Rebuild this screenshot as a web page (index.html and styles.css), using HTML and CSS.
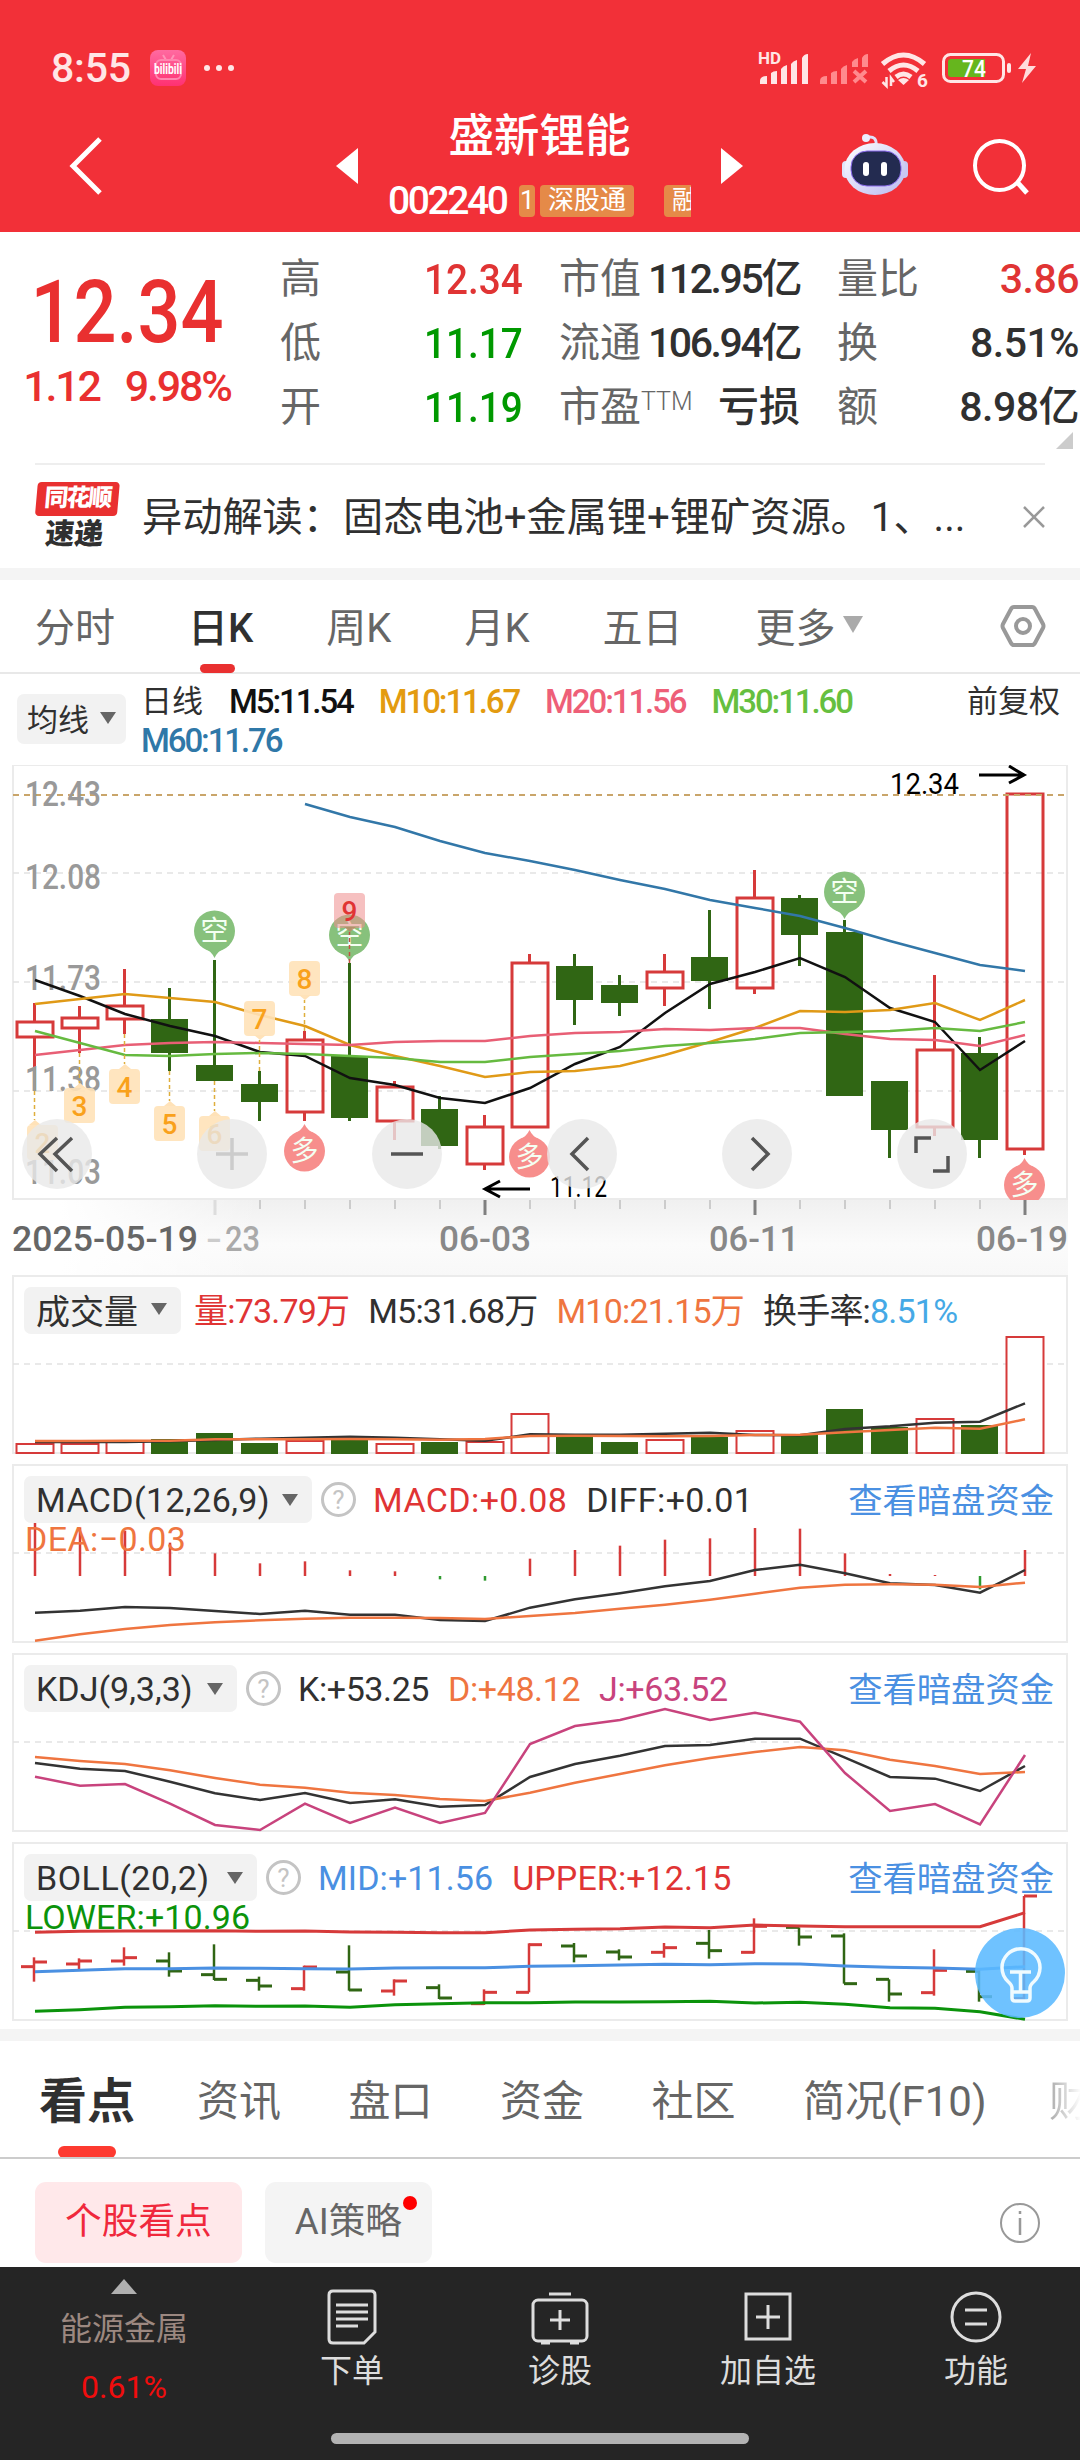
FILE: index.html
```html
<!DOCTYPE html>
<html lang="zh-CN">
  <head>
    <meta charset="UTF-8" />
    <meta name="viewport" content="width=device-width, initial-scale=1.0" />
    <title>盛新锂能 002240</title>
    <link rel="stylesheet" href="styles.css">
  </head>
  <body>
    <header class="top">
      <div class="status">
        <span class="clock">8:55</span>
        <svg class="app-icon" width="36" height="36" viewBox="0 0 36 36">
          <defs>
            <linearGradient id="pink" x1="0" y1="0" x2="0" y2="1">
              <stop offset="0" stop-color="#ff6aa0" />
              <stop offset="1" stop-color="#ff3172" />
            </linearGradient>
          </defs>
          <rect width="36" height="36" rx="8" fill="url(#pink)" />
          <path d="M13 5l3 5M24 5l-3 5" stroke="#ff93b8" stroke-width="2" />
          <rect x="6" y="10" width="25" height="19" rx="5" fill="none" stroke="#ff85af" stroke-width="2" />
          <text x="4" y="24" class="bili" textLength="28" lengthAdjust="spacingAndGlyphs">bilibili</text>
        </svg>
        <span class="dots"><i></i><i></i><i></i></span>
        <svg class="signals" width="290" height="50" viewBox="750 43 290 50">
          <g fill="#ffe6e6">
            <text x="758" y="64" class="hd" textLength="23" lengthAdjust="spacingAndGlyphs">HD</text>
            <path d="M760 84v-3q0-5 7-5v8zM771 84V73q2-2 6-2v13zM781 84V69q2-3 6-4v19zM791 84V64q2-3 6-4v24zM802 84V58q2-4 6-4v30z" />
          </g>
          <g fill="#ff8a8d">
            <path d="M820 84v-3q0-5 7-5v8zM831 84V73q2-2 6-2v13zM841 84V69q2-3 6-4v19zM852 67v-5q2-3 6-4v9zM862 67V58q2-4 6-4v13z" />
            <path d="M854 71l12 11M866 71l-12 11" stroke="#ff8a8d" stroke-width="4" />
          </g>
          <g fill="none" stroke="#ffe6e6" stroke-width="5">
            <path d="M882.500 64q21-18 42 0" />
            <path d="M889 71q14.500-12 29 0" />
            <path d="M896 77q7.500-6 15 0" />
          </g>
          <path d="M898 80q5.500-4 11 0l-5.500 5z" fill="#ffe6e6" />
          <path d="M886.500 77v9l-4-4M891 86v-8l3 4" fill="none" stroke="#ffe6e6" stroke-width="2.500" />
          <text x="917" y="87" class="six">6</text>
          <rect x="943.500" y="54.500" width="60" height="27" rx="7" fill="none" stroke="#ffe6e6" stroke-width="3" />
          <path d="M951 59h34v18h-34q-3 0-3-3v-12q0-3 3-3z" fill="#66b61e" />
          <rect x="1007" y="63" width="4" height="10" rx="2" fill="#ffe6e6" />
          <text x="962" y="76.500" class="bat" textLength="24" lengthAdjust="spacingAndGlyphs">74</text>
          <path d="M1031 53l-13 16h8l-4 14 14-17h-8z" fill="#ffdcdc" />
        </svg>
      </div>
      <div class="nav">
        <svg class="back" width="36" height="62" viewBox="0 0 36 62">
          <path d="M32 4L5 31l27 27" fill="none" stroke="#fff" stroke-width="5" />
        </svg>
        <svg class="prev" width="22" height="36" viewBox="0 0 22 36"><path d="M22 0v36L0 18z" fill="#fff" /></svg>
        <div class="stock">
          <div class="name">盛新锂能</div>
          <div class="code">
            <span class="num">002240</span>
            <div class="chips">
              <span class="chip one">1</span>
              <span class="chip">深股通</span>
              <span class="chip last">融</span>
            </div>
          </div>
        </div>
        <svg class="next" width="22" height="36" viewBox="0 0 22 36"><path d="M0 0v36l22-18z" fill="#fff" /></svg>
        <svg class="robot" width="68" height="64" viewBox="841 131 68 64">
          <defs>
            <linearGradient id="shell" x1="0" y1="0" x2="1" y2="1">
              <stop offset="0" stop-color="#fff" />
              <stop offset="1" stop-color="#b9b8f0" />
            </linearGradient>
          </defs>
          <path d="M876 144q1-9-8-8" fill="none" stroke="#dfe0fb" stroke-width="3" />
          <circle cx="866" cy="137" r="4" fill="#eceefe" />
          <rect x="842" y="160" width="10" height="17" rx="4" fill="#e0e4fb" />
          <rect x="898" y="160" width="10" height="17" rx="4" fill="#c9c8f3" />
          <ellipse cx="875" cy="168" rx="30.500" ry="26" fill="url(#shell)" />
          <rect x="851" y="150" width="50" height="35" rx="16" fill="#232b50" stroke="#8d6df0" stroke-width="1" />
          <rect x="863" y="161" width="6" height="14" rx="3" fill="#fff" />
          <rect x="881" y="161" width="6" height="14" rx="3" fill="#fff" />
        </svg>
        <svg class="search" width="58" height="58" viewBox="972 136 58 58">
          <circle cx="999.500" cy="164.500" r="24.500" fill="none" stroke="#fff" stroke-width="4" />
          <path d="M1017 181l10 11" stroke="#fff" stroke-width="5" />
        </svg>
      </div>
    </header>

    <section class="quote">
      <div class="price">
        <div class="last">12.34</div>
        <div class="change"><span>1.12</span><span>9.98%</span></div>
      </div>
      <dl class="col c1">
        <div><dt>高</dt><dd class="up">12.34</dd></div>
        <div><dt>低</dt><dd class="down">11.17</dd></div>
        <div><dt>开</dt><dd class="down">11.19</dd></div>
      </dl>
      <dl class="col c2">
        <div><dt>市值</dt><dd>112.95亿</dd></div>
        <div><dt>流通</dt><dd>106.94亿</dd></div>
        <div><dt>市盈<sup>TTM</sup></dt><dd class="loss">亏损</dd></div>
      </dl>
      <dl class="col c3">
        <div><dt>量比</dt><dd class="up">3.86</dd></div>
        <div><dt>换</dt><dd>8.51%</dd></div>
        <div><dt>额</dt><dd>8.98亿</dd></div>
      </dl>
      <svg class="corner" width="17" height="17"><path d="M17 0v17H0z" fill="#ccc" /></svg>
    </section>

    <section class="news">
      <div class="brand">
        <span class="brand-top">同花顺</span>
        <span class="brand-bottom">速递</span>
      </div>
      <p>异动解读：固态电池+金属锂+锂矿资源。1、...</p>
      <svg width="22" height="22" viewBox="0 0 22 22"><path d="M1 1l20 20M21 1L1 21" stroke="#999" stroke-width="2.500" /></svg>
    </section>

    <nav class="periods">
      <span>分时</span>
      <span class="on">日K</span>
      <span>周K</span>
      <span>月K</span>
      <span>五日</span>
      <span class="more">更多<svg width="20" height="17"><path d="M0 0h20L10 17z" fill="#aaa" /></svg></span>
      <svg class="hex" width="46" height="46" viewBox="0 0 46 46">
        <path d="M14 4h18q2 0 3 2l8 15q1 2 0 4l-8 15q-1 2-3 2H14q-2 0-3-2L3 25q-1-2 0-4l8-15q1-2 3-2z" fill="none" stroke="#999" stroke-width="4" />
        <circle cx="23" cy="23" r="7" fill="none" stroke="#999" stroke-width="4" />
      </svg>
    </nav>

    <section class="ma">
      <button class="pick">均线<svg width="16" height="12"><path d="M0 0h16L8 12z" /></svg></button>
      <div class="ma-values">
        <span class="cn">日线</span><span class="m5">M5:11.54</span><span class="m10">M10:11.67</span><span class="m20">M20:11.56</span><span class="m30">M30:11.60</span>
        <span class="m60">M60:11.76</span>
      </div>
      <span class="adjust">前复权</span>
    </section>

    <div class="kline">
      <svg id="kline" width="1080" height="510" viewBox="0 765 1080 510"></svg>
    </div>

    <section class="panel vol">
      <svg id="vol" width="1080" height="180" viewBox="0 1275 1080 180"></svg>
      <div class="row">
        <button class="pick">成交量<svg width="16" height="12"><path d="M0 0h16L8 12z" /></svg></button>
        <span class="red">量:73.79万</span>
        <span>M5:31.68万</span>
        <span class="orange">M10:21.15万</span>
        <span>换手率:<b class="sky">8.51%</b></span>
      </div>
    </section>

    <section class="panel macd">
      <svg id="macd" width="1080" height="180" viewBox="0 1464 1080 180"></svg>
      <div class="row">
        <button class="pick">MACD(12,26,9)<svg width="16" height="12"><path d="M0 0h16L8 12z" /></svg></button>
        <i class="help">?</i>
        <span class="red">MACD:+0.08</span>
        <span>DIFF:+0.01</span>
        <a>查看暗盘资金</a>
      </div>
      <div class="row second orange">DEA:−0.03</div>
    </section>

    <section class="panel kdj">
      <svg id="kdj" width="1080" height="180" viewBox="0 1653 1080 180"></svg>
      <div class="row">
        <button class="pick">KDJ(9,3,3)<svg width="16" height="12"><path d="M0 0h16L8 12z" /></svg></button>
        <i class="help">?</i>
        <span>K:+53.25</span>
        <span class="orange">D:+48.12</span>
        <span class="purple">J:+63.52</span>
        <a>查看暗盘资金</a>
      </div>
    </section>

    <section class="panel boll">
      <svg id="boll" width="1080" height="180" viewBox="0 1842 1080 180"></svg>
      <div class="row">
        <button class="pick">BOLL(20,2)<svg width="16" height="12"><path d="M0 0h16L8 12z" /></svg></button>
        <i class="help">?</i>
        <span class="blue">MID:+11.56</span>
        <span class="red">UPPER:+12.15</span>
        <a>查看暗盘资金</a>
      </div>
      <div class="row second green">LOWER:+10.96</div>
      <svg class="bulb" width="90" height="90" viewBox="0 0 90 90">
        <circle cx="45" cy="45" r="45" fill="#5bb9ff" fill-opacity=".88" />
        <path d="M37 70V60q0-3-4-6.500a19 19 0 1 1 26 0q-4 3.500-4 6.500v10q0 3-3 3H40q-3 0-3-3zM38 64h16M35 44h21M45.500 44v20" fill="none" stroke="#f0fbff" stroke-width="3.500" />
      </svg>
    </section>

    <nav class="sections">
      <span class="on">看点</span>
      <span>资讯</span>
      <span>盘口</span>
      <span>资金</span>
      <span>社区</span>
      <span class="f10">简况(F10)</span>
      <span class="fade">财务</span>
    </nav>

    <section class="pills">
      <span class="pill on">个股看点</span>
      <span class="pill">AI策略<i></i></span>
      <svg width="42" height="42" viewBox="0 0 42 42">
        <circle cx="21" cy="21" r="19" fill="none" stroke="#999" stroke-width="2" />
        <path d="M21 9v3M21 16v17" stroke="#999" stroke-width="2.500" />
      </svg>
    </section>

    <footer class="bar">
      <div class="sector">
        <svg width="26" height="15"><path d="M13 0l13 15H0z" fill="#b0b0b0" /></svg>
        <span>能源金属</span>
        <b>0.61%</b>
      </div>
      <div class="item">
        <svg width="60" height="60" viewBox="0 0 60 60">
          <path d="M11 4h38q4 0 4 4v37L42 56H11q-4 0-4-4V8q0-4 4-4zM14 18h32M14 25h32M14 32h32M14 39h22" />
        </svg>
        <span>下单</span>
      </div>
      <div class="item">
        <svg width="60" height="60" viewBox="0 0 60 60">
          <path d="M19 7h22" /><rect x="3" y="13" width="54" height="41" rx="5" /><path d="M30 23v20M20 33h20M11 56h9M40 56h9" />
        </svg>
        <span>诊股</span>
      </div>
      <div class="item">
        <svg width="60" height="60" viewBox="0 0 60 60">
          <rect x="8" y="7" width="44" height="45" /><path d="M30 18v24M18 30h24" />
        </svg>
        <span>加自选</span>
      </div>
      <div class="item">
        <svg width="60" height="60" viewBox="0 0 60 60">
          <circle cx="30" cy="30" r="24" /><path d="M19 23h22M19 37h22" />
        </svg>
        <span>功能</span>
      </div>
      <div class="home"></div>
    </footer>
    <script src="charts.js"></script>
  </body>
</html>
```
FILE: styles.css
```css
* {
  box-sizing: border-box;
}

body {
  margin: 0;
  width: 1080px;
  height: 2460px;
  overflow: hidden;
  background: #fff;
  color: #303030;
  font-family: Roboto, "Noto Sans CJK SC", sans-serif;
  white-space: nowrap;
}

svg {
  display: block;
  flex: none;
}

dl,
dd,
p {
  margin: 0;
}

/* header */

.top {
  height: 232px;
  background: #f23038;
  color: #fff;
}

.status {
  display: flex;
  align-items: center;
  height: 100px;
  padding: 36px 40px 0 51px;
}

.clock {
  width: 99px;
  color: #ffe6e6;
  font-size: 41px;
  font-weight: 500;
  letter-spacing: -0.2px;
}

.bili {
  fill: #fff;
  font: 700 15px Roboto, sans-serif;
}

.dots {
  display: flex;
  gap: 6px;
  margin-left: 18px;
}

.dots i {
  width: 6px;
  height: 6px;
  border-radius: 50%;
  background: #ffe6e6;
}

.signals {
  margin-left: auto;
}

.hd {
  font: 700 16px Roboto, sans-serif;
}

.six {
  fill: #ffe6e6;
  font: 700 19px Roboto, sans-serif;
}

.bat {
  fill: #fff;
  font: 500 24px Roboto, sans-serif;
}

.nav {
  display: flex;
  align-items: center;
  height: 132px;
}

.back {
  margin-left: 68px;
}

.prev {
  margin-left: 232px;
}

.stock {
  width: 303px;
  margin: 4px 30px 0;
}

.name {
  height: 65px;
  line-height: 65px;
  font-size: 45.500px;
  font-weight: 500;
  text-align: center;
}

.code {
  display: flex;
  align-items: center;
  height: 64px;
}

.code .num {
  width: 131px;
  font-size: 39px;
  font-weight: 500;
  letter-spacing: -2.4px;
}

.chips {
  display: flex;
  width: 172px;
  overflow: hidden;
}

.chip {
  flex: none;
  height: 32px;
  line-height: 31px;
  margin-right: 5px;
  padding: 0 8px;
  border-radius: 4px;
  background: #e58a48;
  font-size: 26px;
}

.chip.one {
  width: 16px;
  padding: 0 0 0 1px;
}

.chip.last {
  margin-left: 25px;
}

.robot {
  margin: -4px 63px 0 98px;
}

/* quote */

.quote {
  position: relative;
  display: flex;
  height: 231px;
  padding-top: 15px;
}

.price {
  width: 260px;
  padding: 21px 6px 0 0;
  color: #e93030;
  text-align: center;
}

.price .last {
  height: 88px;
  line-height: 88px;
  font-size: 87px;
  font-weight: 500;
  transform: scaleX(0.87);
}

.change {
  display: flex;
  justify-content: center;
  gap: 25px;
  line-height: 60px;
  font-size: 43px;
  font-weight: 500;
  letter-spacing: -2.2px;
}

.col {
  font-size: 41px;
}

.col div {
  display: flex;
  justify-content: space-between;
  height: 64px;
  line-height: 64px;
}

.col dt {
  color: #666;
}

.col dd {
  font-size: 43px;
  font-weight: 500;
}

.col sup {
  position: relative;
  top: 4px;
  font-size: 25px;
  font-weight: 300;
  line-height: 0;
}

.c1 {
  width: 243px;
  margin-left: 20px;
}

.c1 dd {
  transform: scaleX(0.9);
  transform-origin: right;
}

.c2 {
  width: 241px;
  margin-left: 36px;
}

.c2 dd,
.c3 dd {
  font-size: 41px;
}

.c2 dd {
  letter-spacing: -2.4px;
}

.c2 .loss {
  letter-spacing: 0;
}

.c3 {
  width: 242px;
  margin-left: 37px;
}

.c3 dd {
  letter-spacing: -0.5px;
}

.up {
  color: #e03434;
}

.down {
  color: #009900;
}

.corner {
  position: absolute;
  right: 7px;
  bottom: 14px;
}

.news {
  display: flex;
  align-items: center;
  height: 105px;
  margin: 0 35px;
  border-top: 2px solid #eee;
}

.brand {
  display: flex;
  flex-direction: column;
  width: 82px;
  margin-top: -3px;
  transform: skewX(-5deg);
}

.brand-top {
  height: 34px;
  line-height: 32px;
  border-radius: 4px;
  background: #e93030;
  color: #fff;
  font-size: 24px;
  font-weight: 900;
  letter-spacing: -2px;
  text-align: center;
}

.brand-bottom {
  height: 32px;
  line-height: 36px;
  font-size: 29px;
  font-weight: 900;
  text-align: center;
}

.news p {
  flex: 1;
  margin: -6px 0 0 25px;
  font-size: 40.200px;
}

/* period tabs */

.periods {
  position: relative;
  display: flex;
  align-items: center;
  height: 106px;
  padding: 0 34px 0 35px;
  border-top: 12px solid #f4f4f4;
  border-bottom: 2px solid #e8e8e8;
  color: #666;
  font-size: 40px;
}

.periods span {
  margin: -3px 73px 0 0;
}

.periods .on,
.sections .on {
  position: relative;
  color: #303030;
  font-weight: 500;
}

.periods .on::after {
  content: "";
  position: absolute;
  left: 12px;
  bottom: -19px;
  width: 35px;
  height: 9px;
  border-radius: 5px;
  background: #e93030;
}

.periods .more {
  display: flex;
  align-items: center;
  gap: 7px;
  margin-right: 0;
}

.hex {
  margin-left: auto;
}

/* moving averages */

.ma {
  display: flex;
  height: 91px;
  padding: 0 20px 0 17px;
  font-size: 33px;
}

.pick {
  display: flex;
  align-items: center;
  justify-content: space-between;
  flex: none;
  border: 0;
  border-radius: 7px;
  background: #f2f2f2;
  color: #303030;
  font: 34px Roboto, "Noto Sans CJK SC", sans-serif;
}

.pick path {
  fill: #666;
}

.ma .pick {
  width: 109px;
  height: 50px;
  margin-top: 20px;
  padding: 0 10px 3px;
  font-size: 31px;
}

.ma-values {
  display: flex;
  flex-wrap: wrap;
  align-content: flex-start;
  width: 780px;
  margin: 8px 0 0 15px;
  line-height: 39px;
}

.ma-values span {
  margin-right: 26px;
  font-weight: 500;
  letter-spacing: -2.1px;
}

.ma-values .cn,
.adjust {
  font-size: 31px;
  font-weight: 400;
  letter-spacing: 0;
}

.m5 {
  color: #111;
}

.m10 {
  color: #e39b10;
}

.m20 {
  color: #ee5f78;
}

.m30 {
  color: #66bf3f;
}

.m60 {
  color: #2f78a8;
}

.adjust {
  margin: 8px 0 0 auto;
  line-height: 39px;
}

/* charts */

.kline text {
  font-family: Roboto, "Noto Sans CJK SC", sans-serif;
}

.panel {
  position: relative;
  display: grid;
  height: 180px;
  margin-bottom: 9px;
}

.panel > svg:first-child {
  grid-area: 1 / 1;
}

.row {
  grid-area: 1 / 1;
  z-index: 1;
  display: flex;
  align-items: center;
  height: 47px;
  margin: 12px 26px 0 24px;
  font-size: 34px;
}

.row > span {
  margin-left: 19px;
}

.row b {
  font-weight: 400;
}

.row .pick {
  height: 47px;
  padding: 0 14px 0 12px;
}

.row.second {
  height: 32px;
  margin: 59px 0 0 25px;
}

.row a {
  margin-left: auto;
  padding-bottom: 3px;
  color: #4a90e2;
  font-size: 34.300px;
  letter-spacing: 0;
}

.help {
  width: 35px;
  height: 35px;
  margin-left: 9px;
  border: 3px solid #c4c4c4;
  border-radius: 50%;
  color: #c4c4c4;
  font-size: 26px;
  font-style: normal;
  line-height: 30px;
  letter-spacing: 0;
  text-align: center;
}

.help + span {
  margin-left: 17px;
}

.vol .row {
  letter-spacing: -0.8px;
}

.vol .row > span {
  padding-bottom: 4px;
}

.vol .pick {
  width: 157px;
  padding-bottom: 3px;
  letter-spacing: 0;
}

.vol .row > .red {
  margin-left: 13px;
}

.macd .row,
.macd .pick {
  letter-spacing: 0.4px;
}

.macd .pick {
  width: 288px;
}

.kdj .row {
  letter-spacing: -0.4px;
}

.kdj .pick {
  width: 213px;
}

.boll .row {
  letter-spacing: 0.1px;
}

.boll .pick {
  width: 233px;
  letter-spacing: 0.5px;
}

.red {
  color: #e03434;
}

.orange {
  color: #ef7540;
}

.purple {
  color: #c8437d;
}

.blue {
  color: #4a90e2;
}

.sky {
  color: #45a9e6;
}

.green {
  color: #0b930b;
}

.bulb {
  position: absolute;
  right: 15px;
  bottom: 4px;
  z-index: 2;
}

/* bottom */

.sections {
  display: flex;
  align-items: center;
  height: 130px;
  margin-top: -2px;
  padding: 0 0 4px 39px;
  overflow: hidden;
  border-top: 12px solid #f4f4f4;
  border-bottom: 2px solid #ccc;
  color: #666;
  font-size: 42px;
}

.sections span {
  margin-right: 67.500px;
}

.sections .on {
  margin-right: 62px;
  font-size: 48px;
  font-weight: 700;
}

.sections .on::after {
  content: "";
  position: absolute;
  left: 19px;
  bottom: -26px;
  width: 58px;
  height: 12px;
  border-radius: 6px;
  background: #fd3a30;
}

.sections .fade {
  margin: 0 0 0 -5px;
  background: linear-gradient(90deg, #aaa, #fff 32px);
  background-clip: text;
  color: transparent;
}

.pills {
  display: flex;
  align-items: center;
  gap: 23px;
  height: 108px;
  padding: 19px 39px 0 35px;
}

.pill {
  position: relative;
  height: 81px;
  line-height: 79px;
  padding: 0 30px;
  border-radius: 11px;
  background: #f4f4f4;
  color: #666;
  font-size: 36.700px;
}

.pill.on {
  background: #ffe8ea;
  color: #f0283c;
}

.pill i {
  position: absolute;
  top: 14px;
  right: 15px;
  width: 14px;
  height: 14px;
  border-radius: 50%;
  background: #f00;
}

.pills svg {
  margin-left: auto;
}

.bar {
  position: relative;
  display: flex;
  height: 193px;
  background: #252525;
  color: #ddd;
  font-size: 32px;
}

.sector {
  display: flex;
  flex-direction: column;
  align-items: center;
  width: 248px;
  padding: 12px 0 0;
  color: #9c8880;
}

.sector span {
  margin-top: 9px;
}

.sector b {
  margin-top: 19px;
  color: #f00d0d;
  font-weight: 400;
}

.item {
  display: flex;
  flex-direction: column;
  align-items: center;
  width: 208px;
  padding-top: 20px;
}

.item span {
  margin-top: -2px;
}

.item svg {
  fill: none;
  stroke: #ddd;
  stroke-width: 3;
}

.home {
  position: absolute;
  left: 331px;
  bottom: 16px;
  width: 418px;
  height: 11px;
  border-radius: 6px;
  background: #b3b3b3;
}
```
FILE: charts.js
```js
(function() {
  const RED = "#d63a3a";
  const GREEN = "#306614";
  const STEP = 45;
  const X0 = 35;

  function x(i) {
    return X0 + STEP * i;
  }

  function line(x1, y1, x2, y2, color, width, extra) {
    return `<line x1="${x1}" y1="${y1}" x2="${x2}" y2="${y2}" stroke="${color}" stroke-width="${width}" ${extra || ""}/>`;
  }

  function curve(values, color, width, map, start) {
    const pts = values.map((v, i) => `${x(i + (start || 0))},${map ? map(v) : v}`).join(" ");
    return `<polyline points="${pts}" fill="none" stroke="${color}" stroke-width="${width}"/>`;
  }

  function frame(top, bottom) {
    return `<rect x="13" y="${top}" width="1054" height="${bottom - top}" fill="none" stroke="#ebebeb" stroke-width="2"/>`;
  }

  function grid(y, color) {
    return line(13, y, 1067, y, color || "#e2e2e2", color ? 2 : 1.500, 'stroke-dasharray="6 5"');
  }

  function text(str, tx, ty, size, color, length, extra) {
    return `<text x="${tx}" y="${ty}" font-size="${size}" fill="${color}" ${length ? `textLength="${length}" lengthAdjust="spacingAndGlyphs"` : ""} ${extra || ""}>${str}</text>`;
  }

  function draw(id, parts) {
    document.getElementById(id).innerHTML = parts.join("");
  }

  // high, body top, body bottom, low, 1 = rise
  const candles = [
    [1003, 1022, 1037, 1091, 1], [1006, 1018, 1028, 1053, 1], [969, 1006, 1019, 1034, 1],
    [988, 1019, 1053, 1071, 0], [960, 1065, 1081, 1081, 0], [1071, 1084, 1102, 1121, 0],
    [1031, 1040, 1112, 1121, 1], [963, 1056, 1118, 1121, 0], [1081, 1087, 1121, 1140, 1],
    [1096, 1109, 1146, 1149, 0], [1115, 1127, 1164, 1170, 1], [954, 963, 1127, 1127, 1],
    [954, 966, 1000, 1025, 0], [975, 985, 1003, 1016, 0], [954, 972, 988, 1006, 1],
    [910, 957, 981, 1009, 0], [870, 898, 988, 994, 1], [895, 898, 935, 966, 0],
    [920, 932, 1096, 1096, 0], [1081, 1081, 1130, 1158, 0], [975, 1050, 1127, 1136, 1],
    [1037, 1053, 1140, 1158, 0], [794, 794, 1149, 1155, 1]
  ];

  function candle(c, i) {
    const [high, top, bottom, low, rise] = c;
    const color = rise ? RED : GREEN;
    const wick = line(x(i) - 0.5, high, x(i) - 0.5, top, color, 3) + line(x(i) - 0.5, bottom, x(i) - 0.5, low, color, 3);
    const body = rise
      ? `<rect x="${x(i) - 18}" y="${top}" width="36" height="${bottom - top}" fill="none" stroke="${RED}" stroke-width="3"/>`
      : `<rect x="${x(i) - 19}" y="${top}" width="37" height="${bottom - top}" fill="${GREEN}"/>`;
    return wick + body;
  }

  // sell pin hangs above the candle, buy pin below it
  function pin(i, y, sell) {
    const cx = x(i) - 0.5;
    const color = sell ? "#87c17c" : "#f78e8c";
    const d = sell ? 1 : -1;
    return `<circle cx="${cx}" cy="${y}" r="20.500" fill="${color}"/>` +
      `<path d="M${cx - 12} ${y + d * 16}Q${cx - 3} ${y + d * 20} ${cx} ${y + d * 27}Q${cx + 3} ${y + d * 20} ${cx + 12} ${y + d * 16}z" fill="${color}"/>` +
      text(sell ? "空" : "多", cx, y + 10, 28, "#f4fff2", 0, 'text-anchor="middle"');
  }

  function turn(n, cx, top, tipUp, from) {
    const red = n === 9;
    const color = red ? "#e03434" : "#f9a11b";
    const i = n - 2;
    const tip = tipUp ? top : top + 34;
    const d = tipUp ? -5 : 5;
    return line(x(i) - 0.5, from, x(i) - 0.5, tip + d, red ? "#c25040" : "#dfae3c", 1.500, 'stroke-dasharray="4 3"') +
      `<g opacity="${red ? 0.85 : 1}"><rect x="${cx - 15}" y="${top}" width="31" height="35" rx="4" fill="${red ? "#ee8d8d" : "#ffe2b8"}" fill-opacity="${red ? 0.65 : 0.9}"/>` +
      `<path d="M${x(i) - 6} ${tip}l6 ${d} 6 ${-d}z" fill="${red ? "#b98a66" : "#ffe2b8"}"/></g>` +
      text(n, cx + 0.5, top + 28, 28, color, 0, 'text-anchor="middle" font-weight="500"');
  }

  function control(cx, path, color) {
    return `<circle cx="${cx}" cy="1154" r="35" fill="#e8e8e8" fill-opacity=".8"/>` +
      `<path d="${path}" fill="none" stroke="${color || "#555"}" stroke-width="3.500"/>`;
  }

  const axis = [];
  for (let i = 4; i < 23; i++) {
    const major = (i - 4) % 6 === 0;
    axis.push(line(x(i), 1200, x(i), major ? 1215 : 1209, i === 4 ? "#ddd" : major ? "#808080" : "#ccc", major ? 3 : 2));
  }

  const medium = 'font-weight="500"';

  draw("kline", [
    '<defs><linearGradient id="shade" x1="0" y1="0" x2="0" y2="1"><stop offset="0" stop-color="#f0f0f0"/><stop offset=".6" stop-color="#fbfbfb"/><stop offset="1" stop-color="#f8f8f8"/></linearGradient>' +
    '<linearGradient id="side"><stop offset="0" stop-color="#fff"/><stop offset="1" stop-color="#fff" stop-opacity="0"/></linearGradient>' +
    '<clipPath id="plot"><rect x="0" y="765" width="1080" height="435"/></clipPath></defs>',
    '<rect x="60" y="1200" width="1008" height="75" fill="url(#shade)"/>',
    '<rect x="60" y="1200" width="200" height="75" fill="url(#side)"/>',
    frame(765, 1199),
    grid(873), grid(982), grid(1091),
    candles.map(candle).join(""),
    grid(795, "#c9a56a"),
    text("12.43", 25, 806, 35, "#999", 76, medium),
    text("12.08", 25, 889, 35, "#999", 76, medium),
    text("11.73", 25, 990, 35, "#999", 76, medium),
    text("11.38", 25, 1091, 35, "#999", 76, medium),
    text("11.03", 25, 1184, 35, "#999", 76, medium),
    curve([980, 996, 1014, 1026, 1036, 1052, 1056, 1078, 1085, 1098, 1103, 1088, 1064, 1047, 1013, 984, 972, 958, 977, 1008, 1022, 1070, 1041], "#111", 2.500),
    curve([1004, 999, 994, 998, 1002, 1015, 1026, 1045, 1056, 1066, 1077, 1072, 1071, 1066, 1055, 1042, 1028, 1011, 1012, 1010, 1003, 1020, 1000], "#e09a17", 2.500),
    curve([1055, 1050, 1045, 1043, 1042, 1043, 1044, 1045, 1042, 1041, 1041, 1036, 1033, 1032, 1029, 1030, 1028, 1028, 1034, 1039, 1040, 1046, 1035], "#e85f75", 2.500),
    curve([1031, 1043, 1055, 1056, 1054, 1053, 1054, 1056, 1058, 1062, 1062, 1057, 1054, 1051, 1046, 1043, 1039, 1033, 1032, 1031, 1028, 1031, 1022], "#66ba40", 2.500),
    curve([804, 817, 827, 841, 853, 861, 870, 880, 889, 900, 908, 916, 928, 941, 953, 965, 971], "#3277a8", 2.500, null, 6),
    '<g clip-path="url(#plot)">',
    pin(4, 931, true), pin(7, 935, true), pin(18, 892, true),
    pin(6, 1151, false), pin(11, 1157, false), pin(22, 1185, false),
    "</g>",
    turn(2, 42, 1125, true, 1091),
    turn(3, 79, 1088, true, 1053),
    turn(4, 124, 1069, true, 1034),
    turn(5, 169, 1106, true, 1071),
    turn(6, 214, 1116, true, 1081),
    turn(7, 259, 1001, false, 1071),
    turn(8, 304, 961, false, 1031),
    turn(9, 349, 893, false, 963),
    text("12.34", 890, 794, 30, "#000", 69),
    '<path d="M979 775h45M1009 766l15 9-15 8" fill="none" stroke="#000" stroke-width="3"/>',
    text("11.12", 550, 1197, 30, "#000", 57),
    '<path d="M530 1189h-45M500 1181l-15 8 15 8" fill="none" stroke="#000" stroke-width="3"/>',
    control(57, "M57 1138l-17 16 17 17M72 1138l-17 16 17 17"),
    control(232, "M232 1138v32M216 1154h32", "#ccc"),
    control(407, "M391 1154h32"),
    control(582, "M588 1138l-16 16 16 16"),
    control(757, "M752 1138l16 16-16 16"),
    control(932, "M931 1138h-15v15M933 1171h15v-15"),
    axis.join(""),
    text("2025-05-19", 12, 1251, 35, "#666", 186, medium),
    text("-", 206, 1251, 35, "#ccc", 16, medium),
    text("23", 225, 1251, 35, "#aaa", 35, medium),
    text("06-03", 439, 1251, 35, "#888", 92, medium),
    text("06-11", 709, 1251, 35, "#888", 90, medium),
    text("06-19", 976, 1251, 35, "#888", 92, medium)
  ]);

  const volumes = [1444, 1444, 1441, 1439, 1433, 1443, 1441, 1439, 1444, 1442, 1442, 1414, 1436, 1442, 1440, 1437, 1431, 1435, 1409, 1427, 1419, 1425, 1337];
  const lower = v => 1260 + v / 3;

  draw("vol", [
    frame(1276, 1453),
    grid(1364),
    volumes.map((v, i) => {
      return candles[i][4]
        ? `<rect x="${x(i) - 18.500}" y="${v}" width="37" height="${1453 - v}" fill="#fff" stroke="${RED}" stroke-width="2"/>`
        : `<rect x="${x(i) - 19}" y="${v}" width="37" height="${1454 - v}" fill="${GREEN}"/>`;
    }).join(""),
    curve([546, 546, 546, 544, 540, 536, 533, 530, 533, 538, 542, 523, 524, 524, 521, 518, 525, 526, 507, 499, 488, 485, 430], "#333", 2.500, lower),
    curve([543, 543, 542, 542, 538, 538, 538, 537, 538, 539, 537, 528, 527, 528, 529, 528, 525, 524, 517, 510, 503, 506, 478], "#ef7540", 2.500, lower)
  ]);

  const bars = [780, 802, 812, 848, 880, 910, 904, 931, 934, 958, 962, 896, 870, 857, 839, 835, 804, 806, 880, 942, 945, 988, 870];

  draw("macd", [
    frame(1465, 1642),
    grid(1553),
    bars.map((v, i) => line(x(i), 1576, x(i), lower(v), v > 949 ? "#2f9a2f" : RED, 2.500)).join(""),
    curve([1058, 1052, 1041, 1044, 1053, 1062, 1052, 1064, 1064, 1080, 1083, 1043, 1018, 1000, 979, 963, 930, 914, 940, 970, 975, 998, 930], "#333", 2.500, lower),
    curve([1142, 1123, 1107, 1095, 1087, 1081, 1076, 1073, 1073, 1074, 1077, 1068, 1059, 1046, 1034, 1019, 1001, 983, 974, 973, 974, 981, 968], "#ef7540", 2.500, lower)
  ]);

  const base = v => 1640 + v / 3;

  draw("kdj", [
    frame(1654, 1831),
    grid(1742),
    curve([369, 386, 393, 425, 460, 480, 459, 489, 478, 500, 495, 411, 372, 347, 318, 315, 296, 296, 353, 411, 416, 453, 378], "#333", 2.500, base),
    curve([351, 363, 372, 391, 414, 434, 443, 458, 465, 477, 483, 458, 428, 402, 376, 354, 336, 321, 331, 359, 378, 402, 396], "#ef7540", 2.500, base),
    curve([410, 437, 432, 491, 555, 570, 491, 549, 503, 549, 519, 312, 258, 240, 207, 240, 218, 245, 399, 513, 492, 553, 345], "#c8437d", 2.500, base)
  ]);

  // high, low, open, close
  const ohlc = [
    [952, 1025, 980, 966], [955, 987, 972, 963], [922, 977, 963, 953], [937, 1010, 963, 993],
    [913, 1020, 1004, 1018], [1010, 1052, 1021, 1038], [977, 1052, 1046, 981], [916, 1052, 996, 1050],
    [1018, 1067, 1053, 1023], [1033, 1077, 1043, 1074], [1048, 1095, 1091, 1057], [910, 1057, 1057, 914],
    [909, 967, 918, 948], [928, 961, 936, 951], [909, 953, 937, 923], [870, 956, 910, 932],
    [835, 940, 937, 859], [862, 917, 862, 891], [880, 1031, 888, 1031], [1018, 1085, 1018, 1062],
    [928, 1067, 1058, 991], [990, 1085, 994, 1070], [768, 1080, 1076, 768]
  ];

  draw("boll", [
    frame(1843, 2020),
    grid(1931),
    ohlc.map((d, i) => {
      const color = d[3] < d[2] ? RED : GREEN;
      const cx = x(i) - 1;
      return line(cx, base(d[0]), cx, base(d[1]), color, 2.500) +
        line(cx - 13, base(d[2]), cx, base(d[2]), color, 3) +
        line(cx, base(d[3]), cx + 13, base(d[3]), color, 3);
    }).join(""),
    curve([877, 874, 873, 873, 872, 874, 873, 876, 877, 878, 878, 870, 868, 866, 861, 863, 855, 858, 860, 860, 860, 860, 818], RED, 3, base),
    curve([995, 991, 986, 986, 984, 985, 986, 987, 984, 983, 983, 979, 977, 975, 973, 974, 971, 972, 978, 982, 984, 988, 980], "#4a90e2", 3, base),
    curve([1114, 1109, 1102, 1100, 1097, 1099, 1098, 1102, 1094, 1091, 1088, 1088, 1086, 1086, 1085, 1084, 1089, 1087, 1093, 1103, 1105, 1115, 1138], "#0b930b", 3, base)
  ]);
})();
```
